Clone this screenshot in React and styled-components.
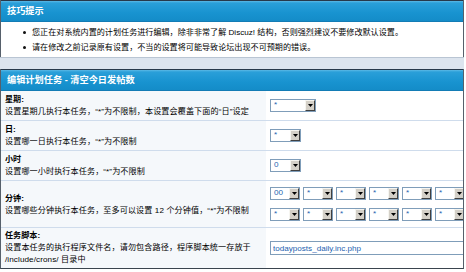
import React from "react";
import styled, { createGlobalStyle } from "styled-components";

const GlobalStyle = createGlobalStyle`
  html, body { margin: 0; padding: 0; background: #fff; }
  body {
    font-family: "Liberation Sans", "Noto Sans CJK SC", sans-serif;
    font-size: 8.1px;
    color: #000;
  }
  * { box-sizing: border-box; }
`;

const Page = styled.div`
  width: 464px;
  overflow: hidden;
`;

const Table = styled.section`
  border-left: 1px solid #56606b;
  border-right: 1px solid #56606b;
  border-bottom: ${(p) => (p.$closed ? "1px solid #3a444e" : "none")};
  background: #fff;
  overflow: hidden;
`;

const Header = styled.div`
  height: 22px;
  line-height: 20px;
  padding-left: 6px;
  border-top: 1px solid #27384a;
  border-bottom: 1px solid #137cb5;
  background: linear-gradient(to bottom, #5cb9e6 0px, #2a9fd9 2px, #1893d0 60%, #148cc8 100%);
  color: #fff;
  font-weight: bold;
  font-size: 9.2px;
  white-space: nowrap;
`;

const TipList = styled.ul`
  margin: 0;
  padding: 3px 0 2px 0;
  list-style: none;
  line-height: 15px;
`;

const Tip = styled.li`
  display: flex;
  align-items: center;
  white-space: nowrap;
`;

const Bullet = styled.span`
  width: 3px;
  height: 3px;
  border-radius: 50%;
  background: #111;
  margin: 0 6px 0 22px;
  flex-shrink: 0;
`;

const Gap = styled.div`
  height: 12px;
  background: #dce4ee;
  border-top: 1px solid #b9c5d3;
`;

const Row = styled.div`
  display: flex;
  border-top: ${(p) => (p.$first ? "none" : "1px solid #cfdcec")};
`;

const LabelCell = styled.div`
  width: 265px;
  flex-shrink: 0;
  padding: ${(p) => p.$pad || "3px 4px 2px"};
  background: #f5f8fb;
  line-height: 12px;
  display: flex;
  flex-direction: column;
  justify-content: center;
`;

const Label = styled.div`
  font-weight: bold;
`;

const Desc = styled.div`
  letter-spacing: 0.1px;
`;

const NoWrap = styled.span`
  white-space: nowrap;
`;

const ValueCell = styled.div`
  flex: 1;
  min-width: 0;
  overflow: hidden;
  padding: ${(p) => p.$pad || "0 4px"};
  display: flex;
  flex-direction: column;
  justify-content: center;
  gap: 8px;
`;

const SelectRow = styled.div`
  display: flex;
  gap: 3px;
`;

const SelectBox = styled.div`
  width: ${(p) => p.$w}px;
  height: 13px;
  flex-shrink: 0;
  border: 1px solid #7f9db9;
  background: #fff;
  display: flex;
  align-items: stretch;
`;

const SelectValue = styled.span`
  flex: 1;
  padding-left: 3px;
  color: #1d5fb0;
  font-size: 8.1px;
  line-height: 10px;
  overflow: hidden;
`;

const SelectButton = styled.span`
  width: 10px;
  flex-shrink: 0;
  background: #d4d0c8;
  border: 1px solid;
  border-color: #f6f5f0 #404040 #404040 #f6f5f0;
  display: flex;
  align-items: center;
  justify-content: center;
`;

const TextInput = styled.input`
  width: 200px;
  height: 14px;
  border: 1px solid #7f9db9;
  padding: 0 2px;
  margin: 0;
  font-family: "Liberation Sans", sans-serif;
  font-size: 8.1px;
  color: #1d5fb0;
  background: #fff;
  outline: none;
`;

function Arrow() {
  return (
    <svg width="5" height="3" viewBox="0 0 5 3">
      <polygon points="0,0 5,0 2.5,3" fill="#000" />
    </svg>
  );
}

function FakeSelect({ w = 30, value = "*" }) {
  return (
    <SelectBox $w={w}>
      <SelectValue>{value}</SelectValue>
      <SelectButton>
        <Arrow />
      </SelectButton>
    </SelectBox>
  );
}

const minutesTop = ["00", "*", "*", "*", "*", "*"];
const minutesBottom = ["*", "*", "*", "*", "*", "*"];

export default function App() {
  return (
    <>
      <GlobalStyle />
      <Page>
        <Table>
          <Header>技巧提示</Header>
          <TipList>
            <Tip>
              <Bullet />
              您正在对系统内置的计划任务进行编辑，除非非常了解 Discuz! 结构，否则强烈建议不要修改默认设置。
            </Tip>
            <Tip>
              <Bullet />
              请在修改之前记录原有设置，不当的设置将可能导致论坛出现不可预期的错误。
            </Tip>
          </TipList>
        </Table>
        <Gap />
        <Table $closed>
          <Header>编辑计划任务 - 清空今日发帖数</Header>
          <Row $first>
            <LabelCell>
              <Label>星期:</Label>
              <Desc>设置星期几执行本任务，“*”为不限制，本设置会覆盖下面的“日”设定</Desc>
            </LabelCell>
            <ValueCell>
              <FakeSelect w={46} />
            </ValueCell>
          </Row>
          <Row>
            <LabelCell>
              <Label>日:</Label>
              <Desc>设置哪一日执行本任务，“*”为不限制</Desc>
            </LabelCell>
            <ValueCell>
              <FakeSelect w={31} />
            </ValueCell>
          </Row>
          <Row>
            <LabelCell>
              <Label>小时</Label>
              <Desc>设置哪一小时执行本任务，“*”为不限制</Desc>
            </LabelCell>
            <ValueCell>
              <FakeSelect w={31} value="0" />
            </ValueCell>
          </Row>
          <Row>
            <LabelCell>
              <Label>分钟:</Label>
              <Desc>设置哪些分钟执行本任务，至多可以设置 12 个分钟值，“*”为不限制</Desc>
            </LabelCell>
            <ValueCell $pad="6px 4px">
              <SelectRow>
                {minutesTop.map((v, i) => (
                  <FakeSelect key={i} w={30} value={v} />
                ))}
              </SelectRow>
              <SelectRow>
                {minutesBottom.map((v, i) => (
                  <FakeSelect key={i} w={30} value={v} />
                ))}
              </SelectRow>
            </ValueCell>
          </Row>
          <Row>
            <LabelCell $pad="2px 4px">
              <Label>任务脚本:</Label>
              <Desc>
                设置本任务的执行程序文件名，请勿包含路径，程序脚本统一存放于 <NoWrap>/include/crons/</NoWrap> 目录中
              </Desc>
            </LabelCell>
            <ValueCell>
              <TextInput readOnly defaultValue="todayposts_daily.inc.php" />
            </ValueCell>
          </Row>
        </Table>
      </Page>
    </>
  );
}
